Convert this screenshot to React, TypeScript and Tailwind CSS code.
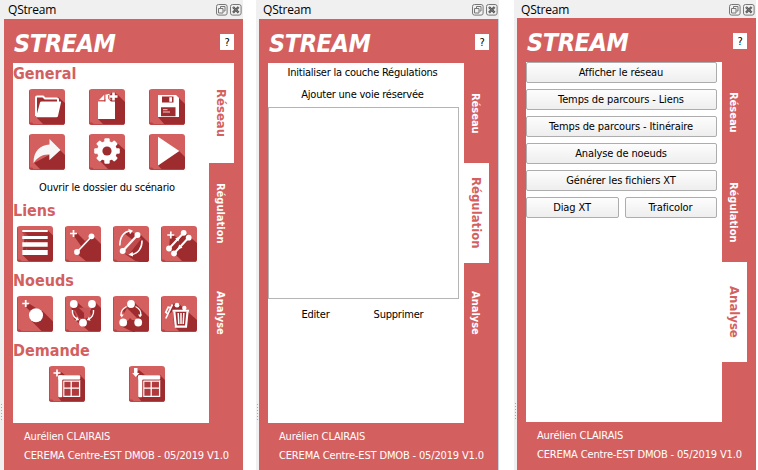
import type { ReactNode } from "react";

type IconProps = { shadow: string; children: ReactNode };

const WHITE = "#fff";
const DARK = "#9e2b2d";

function Tile({ shadow, children }: IconProps) {
  return (
    <div className="h-9 w-9 overflow-hidden rounded-[3px] bg-[#d45f5f]">
      <svg width="36" height="36" viewBox="0 0 36 36" fill="none">
        <path d={shadow} fill={DARK} />
        <path d="M0 33.5H3L5 35.2H0Z" fill="#b64446" />
        <path d="M.4 0V36M0 35.5H36" stroke="#b94649" strokeWidth=".9" />
        {children}
      </svg>
    </div>
  );
}

const Plus = ({ x, y, r = 3.5 }: { x: number; y: number; r?: number }) => (
  <path d={`M${x - r} ${y}H${x + r}M${x} ${y - r}V${y + r}`} stroke={WHITE} strokeWidth="1.7" />
);

const FolderIcon = () => (
  <Tile shadow="M7 28L29 8L36 14V36H15Z">
    <path d="M7 27V8.5Q7 7.5 8 7.5H14L16 9.5H28Q29 9.5 29 10.5V13" stroke={WHITE} strokeWidth="2" fill={DARK} />
    <path d="M12.5 12.5H31.5Q32.3 12.5 32 13.5L29 27Q28.7 28.2 27.5 28.2H7L11 13.5Q11.3 12.5 12.5 12.5Z" fill={WHITE} />
  </Tile>
);

const NewFileIcon = () => (
  <Tile shadow="M9 30L16 10L24 11L29 6L36 13V36H15Z">
    <path d="M9 12.5H16.5V5.5H19V9.5L22 12.5H26V30H9Z" fill={WHITE} />
    <path d="M10 11L15.2 5.8V11Z" fill={WHITE} />
    <path d="M18.6 5.5H20.5V9.7H23" stroke={WHITE} strokeWidth="1.2" />
    <path d="M20.5 7.5H28.5M24.5 3.5V11.5" stroke={DARK} strokeWidth="4.4" />
    <path d="M20.5 7.5H28.5M24.5 3.5V11.5" stroke={WHITE} strokeWidth="2.6" />
  </Tile>
);

const SaveIcon = () => (
  <Tile shadow="M9 28L30 9L36 15V36H16Z">
    <path d="M9 6H27L30 9V28H9Z" fill={WHITE} />
    <path d="M13 7.5H24.5V13.5H13Z" fill={DARK} />
    <path d="M20.3 8.3H23V12.7H20.3Z" fill={WHITE} />
    <path d="M12 18.3H26.5V27.2H12Z" fill={DARK} />
    <path d="M14 20.7H18.5M14 23H21" stroke="#f0cccc" strokeWidth="1" />
  </Tile>
);

const ArrowIcon = () => (
  <Tile shadow="M5 29L20 21V26L31 16L36 21V36H12Z">
    <path d="M20.5 5L31.5 16L20.5 26V20.5C13.5 20 9 23 4.5 29C4.5 17 11 11 20.5 10.5Z" fill="#f7f7f7" />
  </Tile>
);

const GearIcon = () => (
  <Tile shadow="M10 26L27 8L36 16V36H20Z">
    {[0, 45, 90, 135].map((a) => (
      <rect key={a} x="15.3" y="4.2" width="5.4" height="25.6" rx="1.2" fill={WHITE} transform={`rotate(${a} 18 17)`} />
    ))}
    <circle cx="18" cy="17" r="10" fill={WHITE} />
    <circle cx="18" cy="17" r="4.6" fill={DARK} />
  </Tile>
);

const PlayIcon = () => (
  <Tile shadow="M9 31.5L30 17L36 23V36H13.5Z">
    <path d="M9 2.8L30.3 17L9 31.5Z" fill={WHITE} />
  </Tile>
);

const LinesIcon = () => (
  <Tile shadow="M31 4.5L36 9.5V36H12.5L5.5 29L8 6.5L5 4.5Z">
    <path d="M5.3 6H30.7V10H8.5L5.3 6.8ZM9 13H30.7V16.3H9ZM9 20.5H30.7V24H9Z" fill="#b54345" />
    <path d="M8 6.2H31V10.2H11.5ZM8 13H31V16.5H11ZM8 20.5H31V24.3H11Z" fill={DARK} />
    <path d="M5.3 4H30.7V6H5.3ZM5.3 10H30.7V13H5.3ZM5.3 16.3H30.7V20.7H5.3ZM5.3 24H30.7V29H5.3Z" fill={WHITE} />
  </Tile>
);

const LinkIcon = () => (
  <Tile shadow="M9 10L12 7L20 15L27 9L36 18V36H22L11 27L16 20Z">
    <Plus x={8.5} y={7.5} />
    <path d="M12 26L26.5 10.5" stroke={WHITE} strokeWidth="1.8" />
    <circle cx="12" cy="26" r="2.9" fill={WHITE} />
    <circle cx="26.5" cy="10.3" r="2.9" fill={WHITE} />
  </Tile>
);

const SwapLinkIcon = () => (
  <Tile shadow="M17 5L22 8L27 8L36 17V36H24L9 26L20 14L12 8Z">
    <path d="M9 26L25 9L30 15L27 24L17 30Z" fill="#c04b4d" />
    <path d="M17 27L28 13L36 20V36H26Z" fill={DARK} />
    <path d="M9.7 25L24.5 9" stroke={WHITE} strokeWidth="2.2" />
    <circle cx="9.7" cy="25" r="3" fill={WHITE} />
    <circle cx="24.5" cy="9" r="3" fill={WHITE} />
    <path d="M6.8 19.5C7 11.5 10.5 5.5 18 4.8M29 14.5C29.2 21.5 25.5 27.8 18 28.6" stroke={WHITE} strokeWidth="1.6" />
    <path d="M15.2 2.8L20 4.8L17 8.2ZM15.5 28.7L19.6 25.7L20 30.5Z" fill={WHITE} />
  </Tile>
);

const DoubleLinkIcon = () => (
  <Tile shadow="M9 11L12 8L17 13L23 6L36 17V36H22L8 22Z">
    <Plus x={9.8} y={9} />
    <path d="M8 22.5L22.7 6.7M13 27.5L27.7 11.5" stroke={WHITE} strokeWidth="2" />
    <circle cx="8" cy="22.5" r="2.9" fill={WHITE} />
    <circle cx="22.7" cy="6.8" r="2.9" fill={WHITE} />
    <circle cx="13" cy="27.5" r="2.9" fill={WHITE} />
    <circle cx="27.7" cy="11.7" r="2.9" fill={WHITE} />
    <path d="M14.2 12.5L19.3 10.5L17.3 15.6ZM16.5 23.5L18.2 18.5L21.5 21.7Z" fill={WHITE} />
  </Tile>
);

const NodeIcon = () => (
  <Tile shadow="M9 11L12 7.5L19 12L25 14.5L36 25.5V36H25.5L13.5 24L13 15Z">
    <Plus x={8.7} y={7.5} />
    <circle cx="19" cy="19.2" r="7" fill={WHITE} />
  </Tile>
);

const MergeIcon = () => (
  <Tile shadow="M6 11L12 6L24 17L30 6L36 12V36H25L9 23L7 14Z">
    <path d="M9 15L12 11.5L24 12L26 20L18 24L12 22Z" fill="#cb5557" />
    <path d="M13 11L19 17L19 23L14 22L9.5 13Z" fill={DARK} />
    <circle cx="8.8" cy="8" r="3.9" fill={WHITE} />
    <circle cx="27" cy="8" r="3.9" fill={WHITE} />
    <circle cx="18" cy="26.7" r="3.9" fill={WHITE} />
    <path d="M7.5 14C7 18.5 9.5 22 12.5 23.2M28.5 14C29 18.5 26.5 22 23.5 23.2" stroke={WHITE} strokeWidth="1.5" />
    <path d="M10.5 24.8L14.2 24L12 20.5ZM25.5 24.8L21.8 24L24 20.5Z" fill={WHITE} />
  </Tile>
);

const SplitIcon = () => (
  <Tile shadow="M15 11L21 6L36 21V36H20L7.5 30L12 22L10 14Z">
    <path d="M14 12L26 24L18 24L13.5 25L9.5 20Z" fill="#d45f5f" />
    <path d="M17 12L21 12L27 22L25.5 23.5Z" fill={DARK} />
    <path d="M13 28L17 22L22 27V36H20Z" fill={DARK} />
    <circle cx="18" cy="8" r="3.9" fill={WHITE} />
    <circle cx="10.2" cy="26.5" r="3.9" fill={WHITE} />
    <circle cx="25.2" cy="26.5" r="3.9" fill={WHITE} />
    <path d="M13.5 10.5C9.5 12.5 7.5 16 8.2 20M22.5 10.5C26.5 12.5 28.5 16 27.5 20" stroke={WHITE} strokeWidth="1.3" />
    <path d="M6.8 18.5L8.7 21.5L10.8 18.5ZM25 18.5L27 21.5L29.2 18.5Z" fill={WHITE} />
  </Tile>
);

const TrashIcon = () => (
  <Tile shadow="M11 8L17 7L36 24V36H19L13 30L12 15L7 19Z">
    <circle cx="16" cy="9.2" r="2.4" fill={WHITE} />
    <circle cx="23.3" cy="12" r="2.2" fill={WHITE} />
    <path d="M4.8 22.5L11.5 8.3M6.2 17.5L4.8 16.2L7.2 11.2L9.2 11.6" stroke={WHITE} strokeWidth="1.7" />
    <path d="M11.5 14.8H28" stroke={WHITE} strokeWidth="2" />
    <path d="M13.3 15.5L14.8 30.7H25L26.5 15.5" stroke={WHITE} strokeWidth="2.2" />
    <path d="M17.2 17L17.8 28M20 17V28M22.8 17L22.2 28" stroke={WHITE} strokeWidth="1.5" />
  </Tile>
);

const Table = () => (
  <>
    <path d="M13 13H31V31H13Z" fill="#b03a3c" />
    <rect x="9.2" y="9.3" width="22" height="4.4" rx="1" fill={WHITE} />
    <rect x="9.2" y="9.3" width="4.2" height="22" rx="1" fill={WHITE} />
    <path d="M14.7 15H31M14.7 22.2H31M14.7 30.4H31M14.7 14.5V31M22.2 14.5V31M30.6 14V31" stroke={WHITE} strokeWidth="1.3" />
    <path d="M13.8 14V31M14 14.1H31" stroke="#9e2b2d" strokeWidth=".6" />
  </>
);

const AddTableIcon = () => (
  <Tile shadow="M8 10L12 6L16 9H31L36 14V36H13L9 31V11Z">
    <Plus x={8} y={7} />
    <Table />
  </Tile>
);

const ImportTableIcon = () => (
  <Tile shadow="M5 8L10 4L16 9H31L36 14V36H13L9 31V11Z">
    <path d="M5 2H8.5V7H10.5L6.8 11L3.2 7H5Z" fill={WHITE} />
    <Table />
  </Tile>
);

const WindowButtons = () => (
  <div className="flex gap-[2px]">
    <svg width="12" height="12" viewBox="0 0 12 12" fill="none" stroke="#777">
      <rect x=".5" y=".5" width="10.6" height="10.6" rx="2" />
      <path d="M4.5 4V2.5H9V7H7.5M2.5 4.5H7V9H2.5Z" />
    </svg>
    <svg width="12" height="12" viewBox="0 0 12 12" fill="none" stroke="#777">
      <rect x=".5" y=".5" width="10.6" height="10.6" rx="2" />
      <path d="M3 3L8.6 8.6M8.6 3L3 8.6" stroke="#555" strokeWidth="2.4" />
      <path d="M3 3L8.6 8.6M8.6 3L3 8.6" stroke="#999" strokeWidth=".5" />
    </svg>
  </div>
);

const TABS = ["Réseau", "Régulation", "Analyse"];

function Tabs({ active }: { active: number }) {
  return (
    <div className="flex w-[25px] flex-col">
      {TABS.map((label, i) => (
        <div
          key={label}
          className={
            i === active
              ? "flex h-[100px] items-center justify-center pr-px text-[13px] text-[#d45f5f]  bg-white"
              : "flex h-[100px] items-center justify-center pr-[3px] text-[11px] text-white"
          }
        >
          <span className="font-bold tracking-normal whitespace-nowrap [writing-mode:vertical-rl]">{label}</span>
        </div>
      ))}
    </div>
  );
}

type PanelProps = { active: number; strip: string; bar: string; edge: string; children: ReactNode };

function Panel({ active, strip, bar, edge, children }: PanelProps) {
  return (
    <section className="flex h-[470px] flex-col bg-[#f0f0f0]">
      <header className={`flex shrink-0 items-start justify-between pt-1 pr-[1px] ${bar}`}>
        <span className="-mt-[2px] font-['Open_Sans',sans-serif] text-[12px] leading-4 tracking-[-0.2px] text-black [font-stretch:normal]">
          QStream
        </span>
        <WindowButtons />
      </header>
      <div className="flex min-h-0 grow">
        <div className={`flex shrink-0 flex-col items-start ${strip}`}>
          <div className="mt-[385px] ml-px h-[17px] w-px bg-[repeating-linear-gradient(#aaa_0_1px,#f0f0f0_1px_3px)]" />
        </div>
        <div className={`flex grow flex-col bg-[#d45f5f] pl-[9px] ${edge}`}>
          <div className="flex h-11 items-start justify-between pr-[9px]">
            <h1 className="mt-[10px] ml-px text-[25px] leading-[30px] font-bold tracking-[-0.45px] text-white italic">STREAM</h1>
            <div className="mt-[15px] flex h-4 w-[14px] items-center justify-center bg-white pt-px text-[11px] leading-4 text-black">
              ?
            </div>
          </div>
          <div className="flex h-[360px]">
            <div className="w-[196px] bg-white">{children}</div>
            <Tabs active={active} />
          </div>
          <footer className="pt-[4px] pl-[11px] text-[11px] leading-[19px] tracking-[-0.15px] whitespace-nowrap text-white">
            <p>Aurélien CLAIRAIS</p>
            <p>CEREMA Centre-EST DMOB - 05/2019 V1.0</p>
          </footer>
        </div>
      </div>
    </section>
  );
}

const Heading = ({ children }: { children: ReactNode }) => (
  <h2 className="h-5 text-[16px] leading-[21px] font-bold tracking-normal text-[#d45f5f]">{children}</h2>
);

const QtButton = ({ children, width }: { children: ReactNode; width: string }) => (
  <button
    className={`flex h-[21px] items-center justify-center rounded-[2px] border border-[#adadad] bg-linear-to-b from-[#fdfdfd] to-[#eee] pt-px pr-px tracking-[-0.12px] ${width}`}
  >
    {children}
  </button>
);

export default function App() {
  return (
    <main className="flex h-[470px] w-[758px] overflow-hidden bg-white font-['DejaVu_Sans_Condensed','DejaVu_Sans',sans-serif] text-[11px] leading-4 tracking-[-0.22px] text-black [font-stretch:condensed]">
      <div className="mr-[13px] w-[243px]">
        <Panel active={0} strip="w-1" bar="h-[19px] pl-2" edge="">
          <Heading>General</Heading>
          <div className="mt-[6px] ml-4 grid w-[156px] grid-cols-3 gap-x-6 gap-y-[9px]">
            <FolderIcon />
            <NewFileIcon />
            <SaveIcon />
            <ArrowIcon />
            <GearIcon />
            <PlayIcon />
          </div>
          <p className="mt-[10px] mr-2 mb-1 text-center">Ouvrir le dossier du scénario</p>
          <Heading>Liens</Heading>
          <div className="mt-[6px] ml-1 flex gap-3">
            <LinesIcon />
            <LinkIcon />
            <SwapLinkIcon />
            <DoubleLinkIcon />
          </div>
          <div className="h-2" />
          <Heading>Noeuds</Heading>
          <div className="mt-[6px] ml-1 flex gap-3">
            <NodeIcon />
            <MergeIcon />
            <SplitIcon />
            <TrashIcon />
          </div>
          <div className="h-2" />
          <Heading>Demande</Heading>
          <div className="mt-[6px] ml-9 flex gap-11">
            <AddTableIcon />
            <ImportTableIcon />
          </div>
        </Panel>
      </div>
      <div className="mr-[15px] w-[243px]">
        <Panel active={1} strip="w-[3px]" bar="h-[19px] pl-[7px]" edge="border-r border-[#c9d3e6]">
          <div className="flex w-[191px] flex-col text-center">
            <p className="mt-[2px] pr-[2px]">Initialiser la couche Régulations</p>
            <p className="mt-[6px] pr-[2px]">Ajouter une voie réservée</p>
            <div className="mt-1 h-[192px] border border-[#b5b5b5] bg-white" />
            <div className="mt-2 flex pl-[6px]">
              <span className="w-[83px]">Editer</span>
              <span className="w-[83px]">Supprimer</span>
            </div>
          </div>
        </Panel>
      </div>
      <div className="w-[242px]">
        <Panel active={2} strip="w-[3px]" bar="h-[18px] pl-[7px]" edge="">
          <div className="flex flex-col gap-[6px]">
            <QtButton width="w-[191px]">Afficher le réseau</QtButton>
            <QtButton width="w-[191px]">Temps de parcours - Liens</QtButton>
            <QtButton width="w-[191px]">Temps de parcours - Itinéraire</QtButton>
            <QtButton width="w-[191px]">Analyse de noeuds</QtButton>
            <QtButton width="w-[191px]">Générer les fichiers XT</QtButton>
            <div className="flex gap-[6px]">
              <QtButton width="w-[93px]">Diag XT</QtButton>
              <QtButton width="w-[92px]">Traficolor</QtButton>
            </div>
          </div>
        </Panel>
      </div>
    </main>
  );
}
